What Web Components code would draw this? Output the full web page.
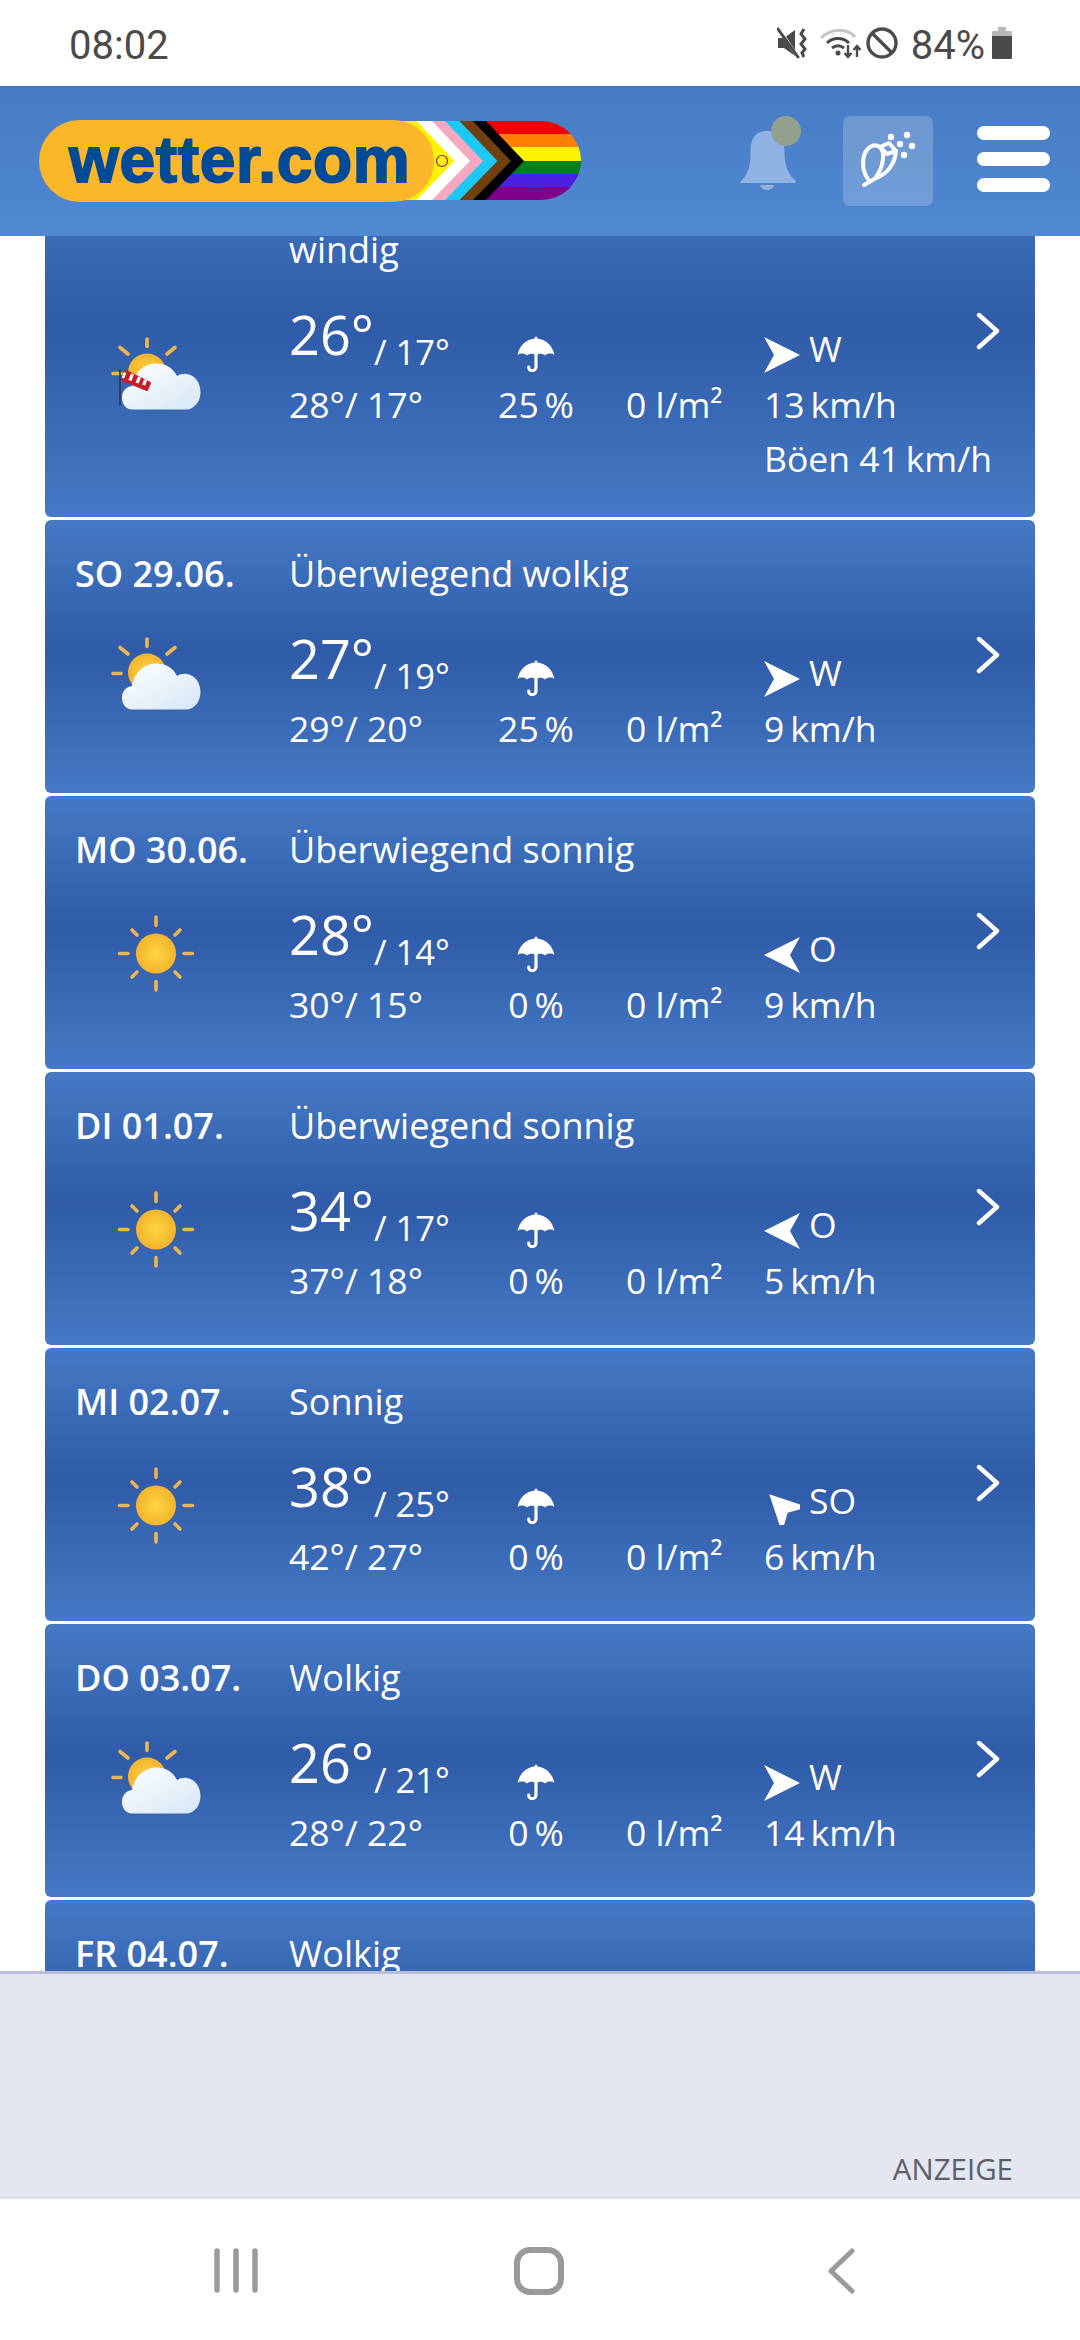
<!DOCTYPE html>
<html lang="de">
<head>
<meta charset="utf-8">
<title>wetter.com</title>
<style>
  html, body { margin: 0; padding: 0; background: #fff; }
  body { width: 1080px; height: 2340px; overflow: hidden; display: flex; flex-direction: column; font-family: "Open Sans", sans-serif; }
  forecast-list { flex: 1; min-height: 0; }
</style>
</head>
<body>
<status-bar></status-bar>
<app-header></app-header>
<forecast-list>
  <forecast-card icon="windy" hi="26" lo="17" feelhi="28" feello="17" precip="25" rain="0" dir="W" speed="13" gust="41"><br slot="title">windig</forecast-card>
  <forecast-card icon="cloud" hi="27" lo="19" feelhi="29" feello="20" precip="25" rain="0" dir="W" speed="9"><span slot="date">SO 29.06.</span>Überwiegend wolkig</forecast-card>
  <forecast-card icon="sun" hi="28" lo="14" feelhi="30" feello="15" precip="0" rain="0" dir="O" speed="9"><span slot="date">MO 30.06.</span>Überwiegend sonnig</forecast-card>
  <forecast-card icon="sun" hi="34" lo="17" feelhi="37" feello="18" precip="0" rain="0" dir="O" speed="5"><span slot="date">DI 01.07.</span>Überwiegend sonnig</forecast-card>
  <forecast-card icon="sun" hi="38" lo="25" feelhi="42" feello="27" precip="0" rain="0" dir="SO" speed="6"><span slot="date">MI 02.07.</span>Sonnig</forecast-card>
  <forecast-card icon="cloud" hi="26" lo="21" feelhi="28" feello="22" precip="0" rain="0" dir="W" speed="14"><span slot="date">DO 03.07.</span>Wolkig</forecast-card>
  <forecast-card><span slot="date">FR 04.07.</span>Wolkig</forecast-card>
</forecast-list>
<ad-panel>ANZEIGE</ad-panel>
<nav-bar></nav-bar>

<script>
const statusTemplate = document.createElement("template");
statusTemplate.innerHTML = `
  <style>
    :host { display: flex; flex: none; height: 86px; background: #fff; color: #4a4a4a; font-family: Roboto, sans-serif; font-size: 40px; align-items: center; padding: 0 68px 0 69px; box-sizing: border-box; justify-content: space-between; }
    .time { margin-top: 5px; }
    .right { display: flex; align-items: center; }
    .pct { margin: 5px 7px 0 13px; }
    svg { display: block; }
  </style>
  <span class="time">08:02</span>
  <div class="right">
    <svg width="32" height="32" viewBox="0 0 32 32" style="margin-right:11px">
      <path d="M1 11h6l11-8v26l-11-8H1z" fill="#4a4a4a"/>
      <path d="M3 3l17 26" stroke="#fff" stroke-width="3"/>
      <path d="M1 2l20 28" stroke="#4a4a4a" stroke-width="3" stroke-linecap="round"/>
      <path d="M27 2l-3 5 4 5-4 5 4 5-3 4 2 4" fill="none" stroke="#4a4a4a" stroke-width="3"/>
    </svg>
    <svg width="42" height="32" viewBox="0 0 42 32" style="margin-right:4px">
      <path d="M1 11C11 1 27 1 35 10" fill="none" stroke="#c4c4c4" stroke-width="3"/>
      <path d="M7 16C13 10 23 10 29 16" fill="none" stroke="#4a4a4a" stroke-width="3"/>
      <path d="M12 21c4-3 8-3 12 0" fill="none" stroke="#4a4a4a" stroke-width="3"/>
      <circle cx="18" cy="26" r="2.5" fill="#4a4a4a"/>
      <path d="M28 18v11M24.5 26l3.500 4 3.500-4M37 30V19M33.500 23l3.500-4 3.500 4" fill="none" stroke="#4a4a4a" stroke-width="2.400"/>
    </svg>
    <svg width="32" height="32" viewBox="0 0 32 32">
      <circle cx="16" cy="16" r="14" fill="none" stroke="#4a4a4a" stroke-width="3.400"/>
      <path d="M7 7l18 18" stroke="#4a4a4a" stroke-width="3.400"/>
    </svg>
    <span class="pct">84%</span>
    <svg width="20" height="32" viewBox="0 0 20 32">
      <path d="M6 0h8v4h5a1 1 0 0 1 1 1v4H0V5a1 1 0 0 1 1-1h5z" fill="#b9b9b9"/>
      <path d="M0 9h20v22a1 1 0 0 1-1 1H1a1 1 0 0 1-1-1z" fill="#4a4a4a"/>
    </svg>
  </div>
`;

class StatusBar extends HTMLElement {
  constructor() {
    super();
    this.attachShadow({ mode: "open" }).appendChild(statusTemplate.content.cloneNode(true));
  }
}
customElements.define("status-bar", StatusBar);

const logoTemplate = document.createElement("template");
logoTemplate.innerHTML = `
  <style>
    :host { display: block; position: relative; width: 542px; height: 82px; }
    svg { position: absolute; left: 0; top: 0; }
    .pill { position: absolute; left: 0; top: 0; width: 395px; height: 82px; border-radius: 41px; background: #fbb629; display: flex; align-items: center; box-sizing: border-box; padding: 0 0 2px 30px; }
    span { font: bold 64px/1 "Liberation Sans", Arial, sans-serif; color: #004a98; -webkit-text-stroke: 1.800px #004a98; letter-spacing: .7px; }
  </style>
  <svg width="542" height="82" viewBox="0 0 542 82">
    <defs><clipPath id="flag"><rect x="0" y="1" width="542" height="79" rx="40"/></clipPath></defs>
    <g clip-path="url(#flag)">
      <rect x="420" y="1" width="122" height="13" fill="#f00000"/>
      <rect x="420" y="14" width="122" height="13" fill="#ff8000"/>
      <rect x="420" y="27" width="122" height="14" fill="#fff200"/>
      <rect x="420" y="41" width="122" height="13" fill="#008018"/>
      <rect x="420" y="54" width="122" height="13" fill="#4b20e0"/>
      <rect x="420" y="67" width="122" height="13" fill="#80008a"/>
      <polygon points="340,1 447,1 485,41 447,80 340,80" fill="#000"/>
      <polygon points="340,1 434,1 472,41 434,80 340,80" fill="#704010"/>
      <polygon points="340,1 420.500,1 458.500,41 420.500,80 340,80" fill="#1cc8f4"/>
      <polygon points="340,1 406,1 444,41 406,80 340,80" fill="#f6a8c0"/>
      <polygon points="340,1 393,1 431,41 393,80 340,80" fill="#fff"/>
      <polygon points="340,1 377.500,1 415.500,41 377.500,80 340,80" fill="#fff200"/>
      <circle cx="403" cy="41" r="5.500" fill="none" stroke="#7a2a7a" stroke-width="1.200"/>
    </g>
  </svg>
  <div class="pill"><span>wetter.com</span></div>
`;

class WetterLogo extends HTMLElement {
  constructor() {
    super();
    this.attachShadow({ mode: "open" }).appendChild(logoTemplate.content.cloneNode(true));
  }
}
customElements.define("wetter-logo", WetterLogo);

const headerTemplate = document.createElement("template");
headerTemplate.innerHTML = `
  <style>
    :host { display: flex; flex: none; height: 150px; position: relative; z-index: 2; align-items: center; box-sizing: border-box; padding: 0 30px 0 39px; background: linear-gradient(#467cc3, #5088d2); }
    .bell { position: relative; width: 58px; height: 76px; margin-left: auto; margin-top: -14px; }
    .bell svg { display: block; }
    .dot { position: absolute; right: -4px; top: 0; width: 30px; height: 30px; border-radius: 50%; background: #92a08e; }
    .pollen { width: 90px; height: 90px; margin-left: 46px; border-radius: 7px; background: rgba(255,255,255,.2); }
    .burger { display: flex; flex-direction: column; gap: 12px; margin-left: 44px; margin-top: -4px; }
    .burger i { display: block; width: 73px; height: 14px; border-radius: 7px; background: #fff; }
  </style>
  <wetter-logo></wetter-logo>
  <div class="bell">
    <svg width="58" height="76" viewBox="0 0 60 76">
      <path d="M2 66C11 58 12 46 12 34C12 20 19 14 29 14C39 14 47 20 47 34C47 46 49 58 59 66L58 68H1Z" fill="#8fb3e3"/>
      <path d="M22 70h14c-1 7-13 7-14 0z" fill="#8fb3e3"/>
    </svg>
    <div class="dot"></div>
  </div>
  <div class="pollen">
    <svg width="90" height="90" viewBox="0 0 90 90">
      <g fill="none" stroke="#fff" stroke-width="4" stroke-linecap="round" stroke-linejoin="round">
        <path d="M21 69L33 62C44 58 52 48 53 35L46 27L37 31"/>
        <path d="M25 63C19 55 19 44 22 37C25 31 31 27 37 31C42 36 41 50 33 61"/>
        <path d="M37 31L44 38L53 35"/>
      </g>
      <g fill="#fff">
        <circle cx="48" cy="21" r="3.200"/>
        <circle cx="64" cy="19" r="3.200"/>
        <circle cx="57" cy="28" r="3.200"/>
        <circle cx="69" cy="30" r="3.200"/>
        <circle cx="61" cy="39" r="3.200"/>
      </g>
    </svg>
  </div>
  <div class="burger"><i></i><i></i><i></i></div>
`;

class AppHeader extends HTMLElement {
  constructor() {
    super();
    this.attachShadow({ mode: "open" }).appendChild(headerTemplate.content.cloneNode(true));
  }
}
customElements.define("app-header", AppHeader);

const listTemplate = document.createElement("template");
listTemplate.innerHTML = `
  <style>
    :host { display: block; overflow: hidden; background: #fff; }
    .scroll { display: flex; flex-direction: column; gap: 3px; margin: -87px 45px 0; }
  </style>
  <div class="scroll"><slot></slot></div>
`;

class ForecastList extends HTMLElement {
  constructor() {
    super();
    this.attachShadow({ mode: "open" }).appendChild(listTemplate.content.cloneNode(true));
  }
}
customElements.define("forecast-list", ForecastList);

const ICONS = {
  sun: `
    <g stroke="#ecb54f" stroke-width="3.600" stroke-linecap="round">
      <path d="M60 23v8.500M60 87.500v8.500M23.500 59.500h8.500M88 59.500h8.500M36 36l5 5M84 36l-5 5M36 83l5-5M84 83l-5-5"/>
    </g>
    <circle cx="60" cy="59.500" r="20" fill="url(#sunfill)"/>`,
  cloud: `
    <g stroke="#ecb54f" stroke-width="3.600" stroke-linecap="round">
      <path d="M51 21v7.500M24 29.500l8 6.500M79 29.500l-8 6.500M17 55.500h8"/>
    </g>
    <circle cx="51" cy="54.500" r="19" fill="url(#sunfill)"/>
    <path d="M36 91.500C30 91.500 26 86 26 80C26 73 30 69 36 68C38 55 48 45.500 60 45.500C70 45.500 77 50 81 58C84 56 88 55.500 91 56C99 57 104.500 65 104.500 74C104.500 84 98 91.500 90 91.500Z" fill="url(#cloudfill)"/>`,
};
ICONS.windy = ICONS.cloud + `
    <path d="M24 51.500v36" stroke="#2a3550" stroke-width="1.600"/>
    <polygon points="30,53 26,62 51,72 54,65" fill="#c4202a" stroke="#c4202a" stroke-width="2" stroke-linejoin="round"/>
    <path d="M29 54.500l-2 5.500" stroke="#fff" stroke-width="2.600"/>
    <path d="M36.500 56l-2.600 6.500M43.500 59l-2.400 6M49.500 62l-1.800 5" stroke="#fff" stroke-width="3.200"/>`;

const cardTemplate = document.createElement("template");
cardTemplate.innerHTML = `
  <style>
    :host { display: block; border-radius: 6px; color: #fff; font-family: "Open Sans", sans-serif; background: linear-gradient(#4579c5, #2f5ba8 48%, #4579c5); }
    .grid { display: grid; grid-template-columns: 244px 187px 120px 168px 212px 1fr; grid-template-rows: auto 108px 53px auto; padding: 30px 0 35px; }
    .date { grid-column: 1; grid-row: 1; font-size: 36px; font-weight: 600; line-height: 47px; padding-left: 30px; white-space: nowrap; }
    .title { grid-column: 2 / -1; grid-row: 1; font-size: 36px; line-height: 47px; }
    .icon { grid-column: 1; grid-row: 2 / -1; align-self: center; justify-self: start; margin-left: 51px; width: 120px; height: 120px; display: block; }
    .temp { grid-column: 2; grid-row: 2; margin-top: 7px; font-size: 54px; line-height: 108px; height: 101px; white-space: nowrap; }
    .temp small { font-size: 34.500px; line-height: 1; vertical-align: -10px; }
    .umbrella { grid-column: 3; grid-row: 2; justify-self: center; margin-top: 63px; display: block; }
    .wind { grid-column: 5; grid-row: 2; display: flex; align-items: flex-start; gap: 9px; margin-top: 52px; font-size: 35.500px; line-height: 47px; }
    .wind svg { display: block; margin-top: 12px; }
    .chev { grid-column: 6; grid-row: 2; margin-top: 38px; display: block; }
    .low { font-size: 35.500px; line-height: 47px; white-space: nowrap; }
    .feel { grid-column: 2; grid-row: 3; }
    .precip { grid-column: 3; grid-row: 3; text-align: center; }
    .rain { grid-column: 4; grid-row: 3; padding-left: 30px; }
    .speed { grid-column: 5 / -1; grid-row: 3; }
    .gust { grid-column: 5 / -1; grid-row: 4; line-height: 48px; }
    .gust:empty { display: none; }
  </style>
  <div class="grid">
    <div class="date"><slot name="date"></slot></div>
    <div class="title"><slot name="title"></slot><slot></slot></div>
    <div class="body" style="display:contents"></div>
  </div>
`;

class ForecastCard extends HTMLElement {
  constructor() {
    super();
    this.attachShadow({ mode: "open" }).appendChild(cardTemplate.content.cloneNode(true));
  }

  connectedCallback() {
    const a = (name) => this.getAttribute(name);
    if (!a("hi")) return;
    const angle = { W: 0, O: 180, SO: 225 }[a("dir")];
    const gust = a("gust") ? `Böen ${a("gust")}\u2009km/h` : "";
    this.shadowRoot.querySelector(".body").innerHTML = `
      <svg class="icon" viewBox="0 0 120 120">
        <defs>
          <radialGradient id="sunfill"><stop offset="0" stop-color="#fdd544"/><stop offset="1" stop-color="#f3b42c"/></radialGradient>
          <linearGradient id="cloudfill" x1="0" y1="0" x2="1" y2="1"><stop offset="0" stop-color="#fff"/><stop offset="1" stop-color="#d5e7f6"/></linearGradient>
        </defs>
        ${ICONS[a("icon")]}
      </svg>
      <div class="temp">${a("hi")}°<small>/ ${a("lo")}°</small></div>
      <svg class="umbrella" width="38" height="36" viewBox="0 0 34 36" preserveAspectRatio="none">
        <path d="M17 0L18.500 2.500C26 3.500 32 10 33.500 19C31 17 27.500 17 25 19.500C23 17 19 17 17 19.500C15 17 11 17 9 19.500C6.500 17 3 17 .5 19C2 10 8 3.500 15.500 2.500Z" fill="#fff"/>
        <path d="M17 18V31C17 36 10 36 10.500 31" fill="none" stroke="#fff" stroke-width="2.800" stroke-linecap="round"/>
      </svg>
      <div class="wind">
        <svg width="36" height="36" viewBox="0 0 36 36"><path d="M36 18L0 0L10 18L0 36Z" fill="#fff" transform="rotate(${angle} 18 18)"/></svg>
        <span>${a("dir")}</span>
      </div>
      <svg class="chev" width="24" height="40" viewBox="0 0 24 40"><path d="M3 4L21 20L3 36" fill="none" stroke="#fff" stroke-width="4.400" stroke-linecap="round" stroke-linejoin="round"/></svg>
      <div class="low feel">${a("feelhi")}°/ ${a("feello")}°</div>
      <div class="low precip">${a("precip")}\u2009%</div>
      <div class="low rain">${a("rain")} l/m²</div>
      <div class="low speed">${a("speed")}\u2009km/h</div>
      <div class="low gust">${gust}</div>
    `;
  }
}
customElements.define("forecast-card", ForecastCard);

const adTemplate = document.createElement("template");
adTemplate.innerHTML = `
  <style>
    :host { display: flex; flex: none; height: 228px; box-sizing: border-box; position: relative; z-index: 1; background: #e4e6f2; border-top: 3px solid #b8bfdc; border-bottom: 3px solid #dfdfe4; color: #5c6068; font-family: "Open Sans", sans-serif; font-size: 29.500px; justify-content: flex-end; align-items: flex-end; padding: 0 67px 7px 0; }
  </style>
  <slot></slot>
`;

class AdPanel extends HTMLElement {
  constructor() {
    super();
    this.attachShadow({ mode: "open" }).appendChild(adTemplate.content.cloneNode(true));
  }
}
customElements.define("ad-panel", AdPanel);

const navTemplate = document.createElement("template");
navTemplate.innerHTML = `
  <style>
    :host { display: block; flex: none; height: 141px; background: #fff; }
    svg { display: block; }
  </style>
  <svg width="1080" height="141" viewBox="0 0 1080 141">
    <g fill="none" stroke="#9a9a9a" stroke-width="5.500" stroke-linecap="round" stroke-linejoin="round">
      <path d="M217 52V91M236 52V91M255 52V91"/>
      <rect x="517" y="51" width="44" height="42" rx="13" stroke-width="6"/>
      <path d="M852 52L831 72L852 92" stroke-width="5"/>
    </g>
  </svg>
`;

class NavBar extends HTMLElement {
  constructor() {
    super();
    this.attachShadow({ mode: "open" }).appendChild(navTemplate.content.cloneNode(true));
  }
}
customElements.define("nav-bar", NavBar);
</script>
</body>
</html>
